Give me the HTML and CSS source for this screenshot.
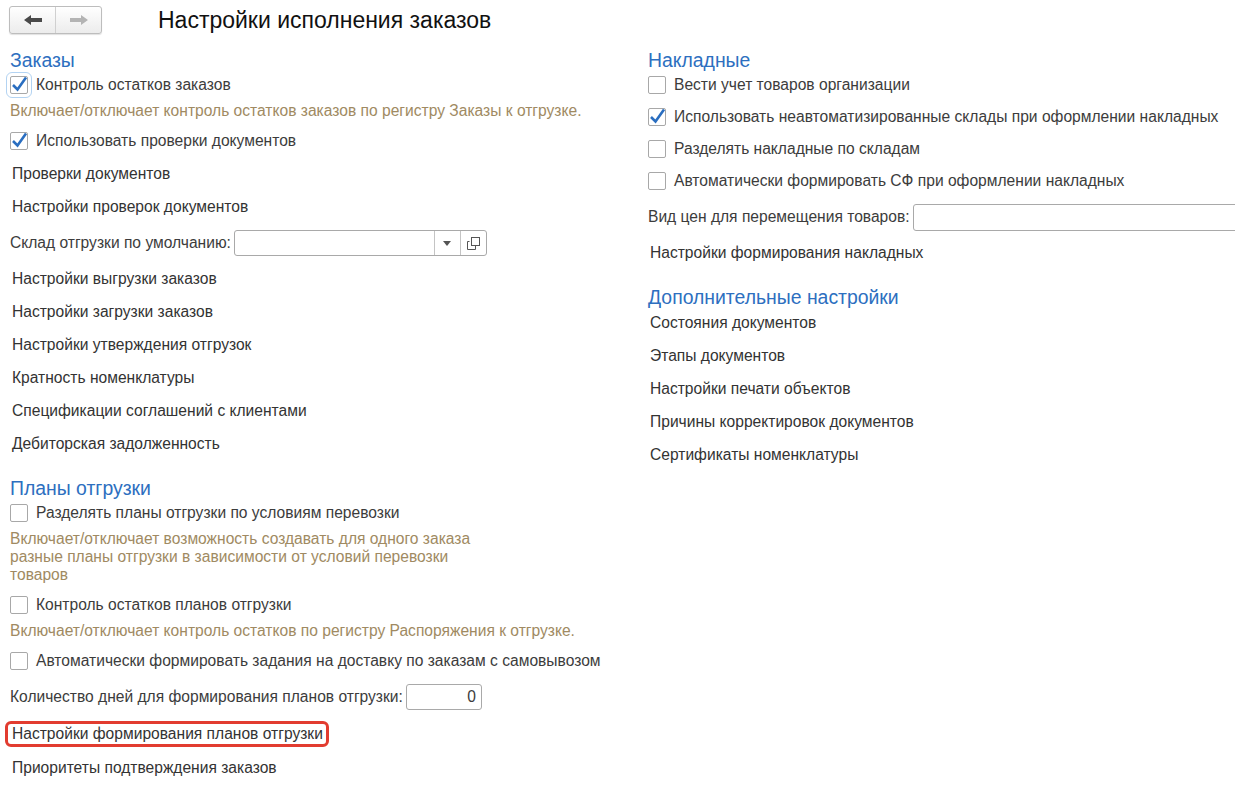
FILE: index.html
```html
<!DOCTYPE html>
<html lang="ru">
<head>
<meta charset="utf-8">
<title>Настройки исполнения заказов</title>
<link rel="stylesheet" href="styles.css">
</head>
<body>
<div class="topbar">
  <div class="navgroup">
    <span class="navbtn">
      <svg width="18" height="10" viewBox="0 0 18 10"><path d="M0 5 L7 0 L7 3 L18 3 L18 7 L7 7 L7 10 Z" fill="#4a4a4a"/></svg>
    </span>
    <span class="navbtn">
      <svg width="18" height="10" viewBox="0 0 18 10"><path d="M18 5 L11 0 L11 3 L0 3 L0 7 L11 7 L11 10 Z" fill="#b4b4b4"/></svg>
    </span>
  </div>
  <h1 class="page-title">Настройки исполнения заказов</h1>
</div>

<div class="columns">
  <div class="col col-left">
    <div class="group-title">Заказы</div>
    <div class="check"><span class="box box-focus checked"><svg width="18" height="18" viewBox="0 0 18 18"><polyline points="3,9 7.5,13.5 16,1.5" fill="none" stroke="#2a6ec0" stroke-width="2.6"/></svg></span><span class="label">Контроль остатков заказов</span></div>
    <div class="hint">Включает/отключает контроль остатков заказов по регистру Заказы к отгрузке.</div>
    <div class="check"><span class="box checked"><svg width="18" height="18" viewBox="0 0 18 18"><polyline points="3,9 7.5,13.5 16,1.5" fill="none" stroke="#2a6ec0" stroke-width="2.6"/></svg></span><span class="label">Использовать проверки документов</span></div>
    <div class="link">Проверки документов</div>
    <div class="link">Настройки проверок документов</div>
    <div class="field">
      <span class="field-label">Склад отгрузки по умолчанию:</span>
      <span class="input input-select">
        <span class="input-text"></span>
        <span class="input-btn"><svg width="8" height="5" viewBox="0 0 8 5"><path d="M0 0 L8 0 L4 5 Z" fill="#555"/></svg></span>
        <span class="input-btn"><svg width="13" height="13" viewBox="0 0 13 13"><rect x="4.5" y="0.5" width="8" height="8" fill="none" stroke="#555"/><path d="M0.5 4.5 V12.5 H8.5 V9" fill="none" stroke="#555"/><path d="M0.5 4.5 H2.5" fill="none" stroke="#555"/></svg></span>
      </span>
    </div>
    <div class="link">Настройки выгрузки заказов</div>
    <div class="link">Настройки загрузки заказов</div>
    <div class="link">Настройки утверждения отгрузок</div>
    <div class="link">Кратность номенклатуры</div>
    <div class="link">Спецификации соглашений с клиентами</div>
    <div class="link">Дебиторская задолженность</div>

    <div class="group-title">Планы отгрузки</div>
    <div class="check"><span class="box"></span><span class="label">Разделять планы отгрузки по условиям перевозки</span></div>
    <div class="hint hint-narrow">Включает/отключает возможность создавать для одного заказа разные планы отгрузки в зависимости от условий перевозки товаров</div>
    <div class="check"><span class="box"></span><span class="label">Контроль остатков планов отгрузки</span></div>
    <div class="hint">Включает/отключает контроль остатков по регистру Распоряжения к отгрузке.</div>
    <div class="check"><span class="box"></span><span class="label">Автоматически формировать задания на доставку по заказам с самовывозом</span></div>
    <div class="field">
      <span class="field-label">Количество дней для формирования планов отгрузки:</span>
      <span class="input input-number">0</span>
    </div>
    <div class="link link-marked">Настройки формирования планов отгрузки</div>
    <div class="link">Приоритеты подтверждения заказов</div>
  </div>

  <div class="col col-right">
    <div class="group-title">Накладные</div>
    <div class="check"><span class="box"></span><span class="label">Вести учет товаров организации</span></div>
    <div class="check"><span class="box checked"><svg width="18" height="18" viewBox="0 0 18 18"><polyline points="3,9 7.5,13.5 16,1.5" fill="none" stroke="#2a6ec0" stroke-width="2.6"/></svg></span><span class="label">Использовать неавтоматизированные склады при оформлении накладных</span></div>
    <div class="check"><span class="box"></span><span class="label">Разделять накладные по складам</span></div>
    <div class="check"><span class="box"></span><span class="label">Автоматически формировать СФ при оформлении накладных</span></div>
    <div class="field">
      <span class="field-label">Вид цен для перемещения товаров:</span>
      <span class="input input-wide"></span>
    </div>
    <div class="link">Настройки формирования накладных</div>

    <div class="group-title">Дополнительные настройки</div>
    <div class="link">Состояния документов</div>
    <div class="link">Этапы документов</div>
    <div class="link">Настройки печати объектов</div>
    <div class="link">Причины корректировок документов</div>
    <div class="link">Сертификаты номенклатуры</div>
  </div>
</div>
</body>
</html>
```

FILE: styles.css
```css
html, body {
  margin: 0;
  padding: 0;
  overflow: hidden;
  background: #fff;
}
body {
  font-family: "Liberation Sans", Arial, sans-serif;
  font-size: 15.6px;
  color: #3c3c3c;
  width: 1235px;
  height: 797px;
}

.topbar {
  display: flex;
  align-items: center;
  height: 40px;
  padding-left: 9px;
  box-sizing: border-box;
}
.navgroup {
  display: flex;
  height: 28px;
  border: 1px solid #bdbdbd;
  border-radius: 3px;
  box-sizing: border-box;
  background: linear-gradient(#ffffff, #ececec);
  box-shadow: 0 1px 1px rgba(0,0,0,0.12);
}
.navbtn {
  width: 45px;
  display: flex;
  align-items: center;
  justify-content: center;
}
.navbtn + .navbtn {
  border-left: 1px solid #d0d0d0;
}
.page-title {
  margin: 0 0 0 56px;
  font-size: 23px;
  font-weight: normal;
  color: #111;
  line-height: 28px;
}

.columns {
  display: flex;
  padding-top: 9px;
}
.col {
  display: flex;
  flex-direction: column;
  align-items: flex-start;
}
.col-left {
  width: 638px;
  padding-left: 10px;
}
.col-right {
  flex: 1;
  min-width: 0;
}

.group-title {
  font-size: 19.4px;
  line-height: 24px;
  height: 24px;
  color: #2d6fc0;
  margin-top: 20px;
}
.group-title:first-child {
  margin-top: -1px;
}

.check {
  display: flex;
  align-items: center;
  height: 24px;
  margin-top: 8px;
  white-space: nowrap;
}
.group-title + .check {
  margin-top: 1px;
}
.box {
  width: 18px;
  height: 18px;
  box-sizing: border-box;
  border: 1px solid #a8a8a8;
  border-radius: 2px;
  background: #fff;
  position: relative;
  flex: none;
}
.box svg {
  position: absolute;
  left: -1px;
  top: -1px;
  overflow: visible;
}
.box-focus {
  outline: 1px solid #b3d3f2;
  outline-offset: 3px;
}
.label {
  margin-left: 8px;
}

.hint {
  margin-top: 5px;
  line-height: 18px;
  color: #a08a62;
}
.hint-narrow {
  width: 475px;
}
.hint + .check {
  margin-top: 9px;
}

.link {
  height: 24px;
  line-height: 24px;
  margin-top: 9px;
  padding-left: 2px;
  color: #333;
  white-space: nowrap;
}
.group-title + .link {
  margin-top: 2px;
}
.link-marked {
  height: 26px;
  line-height: 20px;
  box-sizing: border-box;
  border: 3px solid #e23c30;
  border-radius: 6px;
  margin-left: -5px;
  padding: 0 3px 0 4px;
}

.field {
  display: flex;
  align-items: center;
  height: 26px;
  margin-top: 11px;
  white-space: nowrap;
}
.field + .link {
  margin-top: 11px;
}
.field-label {
  margin-right: 3px;
}
.input {
  display: flex;
  height: 26px;
  box-sizing: border-box;
  border: 1px solid #a9a9a9;
  border-radius: 3px;
  background: #fff;
}
.input-select {
  width: 253px;
}
.input-text {
  flex: 1;
}
.input-btn {
  width: 25px;
  border-left: 1px solid #c4c4c4;
  display: flex;
  align-items: center;
  justify-content: center;
}
.input-number {
  width: 76px;
  justify-content: flex-end;
  align-items: center;
  padding-right: 5px;
}
.input-wide {
  width: 340px;
  height: 27px;
}
```
